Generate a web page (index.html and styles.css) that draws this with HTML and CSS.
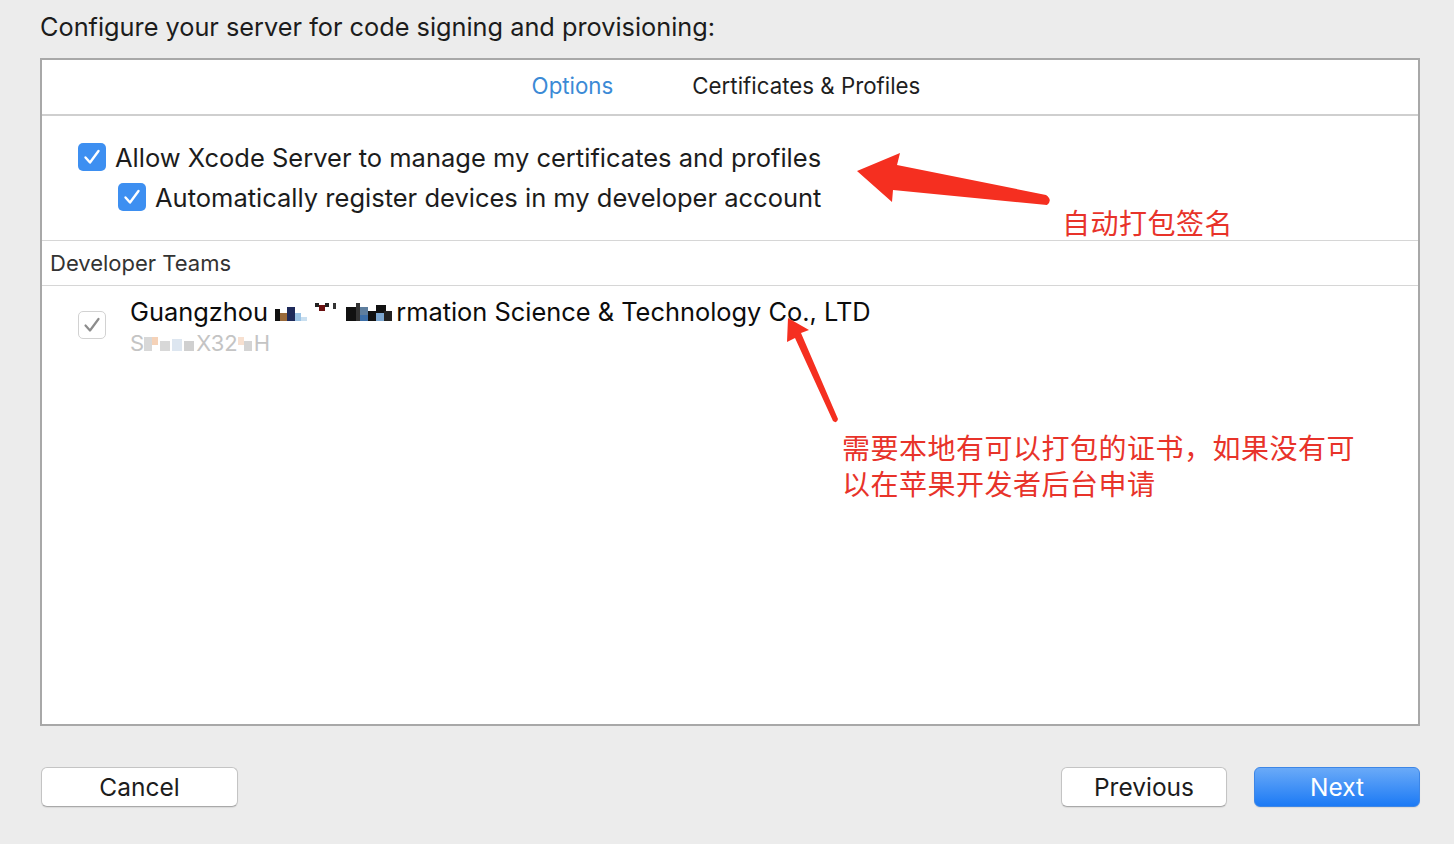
FILE: index.html
```html
<!DOCTYPE html>
<html>
<head>
<meta charset="utf-8">
<link rel="stylesheet" href="styles.css">
</head>
<body>
<div class="page">
  <h1 class="title">Configure your server for code signing and provisioning:</h1>
  <div class="panel">
    <div class="tabs">
      <span class="tab active">Options</span>
      <span class="tab">Certificates &amp; Profiles</span>
    </div>
    <div class="options">
      <label class="opt">
        <span class="cb on"><svg viewBox="0 0 28 28" width="28" height="28"><path d="M7.5 14.5 L12 19.5 L20.5 8" fill="none" stroke="#fff" stroke-width="2.4" stroke-linecap="round" stroke-linejoin="round"/></svg></span>
        <span class="opt-text">Allow Xcode Server to manage my certificates and profiles</span>
      </label>
      <label class="opt sub">
        <span class="cb on"><svg viewBox="0 0 28 28" width="28" height="28"><path d="M7.5 14.5 L12 19.5 L20.5 8" fill="none" stroke="#fff" stroke-width="2.4" stroke-linecap="round" stroke-linejoin="round"/></svg></span>
        <span class="opt-text">Automatically register devices in my developer account</span>
      </label>
    </div>
    <div class="section-head">Developer Teams</div>
    <div class="teams">
      <div class="team">
        <span class="cb off"><svg viewBox="0 0 28 28" width="28" height="28"><path d="M7.5 14.5 L12 19.5 L20.5 8" fill="none" stroke="#8c8c8c" stroke-width="2.2" stroke-linecap="round" stroke-linejoin="round"/></svg></span>
        <div class="team-info">
          <div class="team-name">Guangzhou <svg class="mosaic" width="32" height="14" viewBox="0 0 32 14"><rect x="0" y="2" width="5" height="12" fill="#111"/><rect x="5" y="6" width="7" height="8" fill="#9a6a3a"/><rect x="12" y="0" width="8" height="14" fill="#1e2a5a"/><rect x="20" y="6" width="6" height="8" fill="#9cc4e6"/><rect x="26" y="10" width="6" height="4" fill="#c9dff0"/></svg><span class="gap"></span><svg class="mosaic high" width="24" height="10" viewBox="0 0 24 10"><rect x="0" y="0" width="4" height="4" fill="#222"/><rect x="4" y="2" width="6" height="6" fill="#6b1010"/><rect x="10" y="0" width="4" height="4" fill="#222"/><rect x="18" y="0" width="3" height="6" fill="#333"/></svg><span class="gap2"></span><svg class="mosaic" width="50" height="18" viewBox="0 0 50 18"><rect x="0" y="4" width="10" height="14" fill="#111"/><rect x="10" y="0" width="4" height="18" fill="#333"/><rect x="14" y="4" width="8" height="8" fill="#5e7e9e"/><rect x="14" y="12" width="8" height="6" fill="#3d6fa8"/><rect x="22" y="8" width="8" height="10" fill="#111"/><rect x="30" y="2" width="10" height="8" fill="#111"/><rect x="30" y="10" width="8" height="8" fill="#7da7d0"/><rect x="38" y="8" width="8" height="10" fill="#222"/></svg>rmation Science &amp; Technology Co., LTD</div>
          <div class="team-id">S<svg class="mosaic" width="52" height="14" viewBox="0 0 52 14"><rect x="0" y="0" width="8" height="14" fill="#d8d8d8"/><rect x="8" y="0" width="6" height="8" fill="#f5d2b8"/><rect x="16" y="4" width="10" height="10" fill="#d8d8d8"/><rect x="28" y="2" width="10" height="12" fill="#dde6f0"/><rect x="40" y="4" width="10" height="10" fill="#d0d0d0"/></svg>X32<svg class="mosaic" width="16" height="14" viewBox="0 0 16 14"><rect x="0" y="0" width="6" height="8" fill="#f7e0d0"/><rect x="6" y="4" width="8" height="10" fill="#d4d4d4"/></svg>H</div>
        </div>
      </div>
    </div>
  </div>
  <div class="buttons">
    <button class="btn">Cancel</button>
    <div class="right">
      <button class="btn">Previous</button>
      <button class="btn primary">Next</button>
    </div>
  </div>
</div>

<div class="note note1">自动打包签名</div>
<div class="note note2"><div>需要本地有可以打包的证书，如果没有可</div><div>以在苹果开发者后台申请</div></div>

<svg class="arrows" width="1454" height="844" viewBox="0 0 1454 844">
  <path d="M857 171 L900 153 L897 165 L1046 195 Q1053 200 1047 205 L893 190 L892 202 Z" fill="#f52f20"/>
  <path d="M788 318 L809 330 L801 333 L838 419 Q837 424 833 421 L795 338 L787 342 Z" fill="#f52f20"/>
</svg>
</body>
</html>
```

FILE: styles.css
```css
* { box-sizing: border-box; }
html, body { margin: 0; padding: 0; }
body {
  background: #ececec;
  font-family: Inter, "Liberation Sans", "Noto Sans CJK SC", sans-serif;
  color: #1c1c1c;
  width: 1454px;
  height: 844px;
  overflow: hidden;
  position: relative;
}
.page {
  padding: 12px 34px 0 40px;
}
.title {
  margin: 0;
  font-size: 25.3px;
  font-weight: 400;
  line-height: 30px;
  height: 46px;
}
.panel {
  height: 668px;
  background: #fff;
  border: 2px solid #a8a8a8;
  display: flex;
  flex-direction: column;
}
.tabs {
  height: 56px;
  border-bottom: 2px solid #cfcfcf;
  display: flex;
  justify-content: center;
  align-items: center;
  gap: 79px;
  font-size: 22.3px;
  padding-right: 8px;
  padding-bottom: 4px;
}
.tab { color: #1e1e1e; }
.tab.active { color: #3b8ad6; }
.options {
  height: 125px;
  border-bottom: 1px solid #d6d6d6;
  padding: 27px 0 0 36px;
  display: flex;
  flex-direction: column;
  gap: 12px;
}
.opt {
  display: flex;
  align-items: center;
  gap: 9px;
  height: 28px;
  font-size: 25.5px;
}
.opt.sub { padding-left: 40px; }
.cb {
  width: 28px;
  height: 28px;
  border-radius: 5px;
  flex: none;
  display: inline-flex;
}
.cb.on { background: #3d8ff1; }
.cb.off { background: #fff; border: 1px solid #d2d2d2; margin-top: 15px; }
.cb.off svg { margin: -1px; }
.section-head {
  height: 45px;
  border-bottom: 1px solid #d6d6d6;
  padding-left: 8px;
  display: flex;
  align-items: center;
  font-size: 22px;
  color: #333;
}
.teams { flex: 1; padding: 10px 0 0 36px; }
.team { display: flex; gap: 24px; }
.team-info { display: flex; flex-direction: column; }
.team-name {
  font-size: 25.4px;
  line-height: 32px;
  color: #0c0c0c;
  white-space: nowrap;
}
.gap { display: inline-block; width: 8px; }
.gap2 { display: inline-block; width: 7px; }
.mosaic { vertical-align: baseline; }
.mosaic.high { vertical-align: 8px; }
.team-id {
  font-size: 22px;
  line-height: 26px;
  color: #c4c4c4;
  margin-top: 2px;
  white-space: nowrap;
}
.buttons {
  display: flex;
  justify-content: space-between;
  align-items: center;
  margin-top: 41px;
  padding-left: 1px;
}
.right { display: flex; gap: 27px; }
.btn {
  font-family: inherit;
  height: 40px;
  font-size: 24.5px;
  color: #1c1c1c;
  background: #fff;
  border: 1px solid #c4c4c4;
  border-bottom-color: #a9a9a9;
  border-radius: 6px;
  box-shadow: 0 1px 1px rgba(0,0,0,0.08);
  padding: 0;
  width: 197px;
}
.right .btn { width: 166px; }
.btn.primary {
  color: #fff;
  border: 1px solid #3d86e6;
  background: linear-gradient(#6aaaf8, #1c7af5);
}
.note {
  position: absolute;
  color: #e8332a;
  font-family: "Noto Sans CJK SC", sans-serif;
  font-size: 28px;
  line-height: 36px;
  letter-spacing: 0.5px;
}
.note1 { left: 1062px; top: 204px; }
.note2 { left: 842px; top: 429px; }
.arrows {
  position: absolute;
  left: 0;
  top: 0;
  pointer-events: none;
}
```
